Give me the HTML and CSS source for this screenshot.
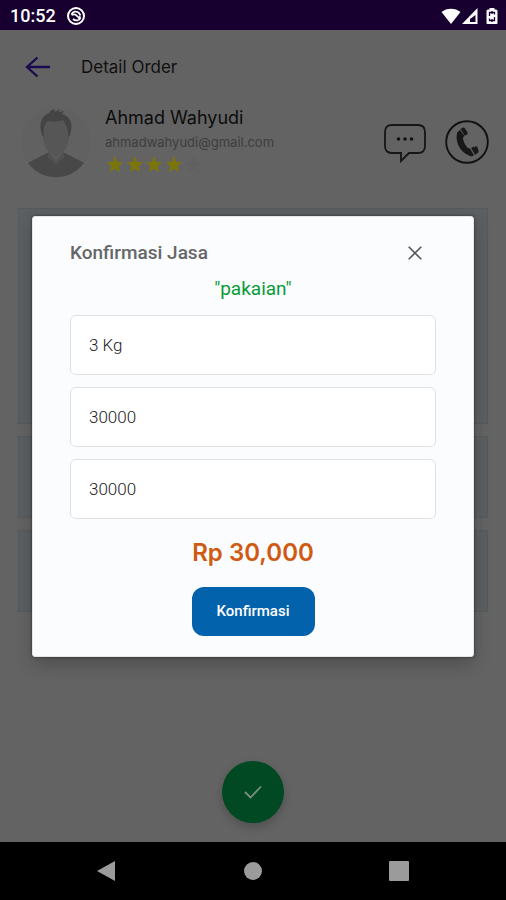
FILE: index.html
```html
<!DOCTYPE html>
<html lang="id">
<head>
<meta charset="utf-8">
<meta name="viewport" content="width=device-width, initial-scale=1">
<title>Detail Order</title>
<link rel="stylesheet" href="styles.css">
</head>
<body>
<header class="status">
  <span class="clock">10:52</span>
  <svg class="status-app" width="20" height="20" viewBox="0 0 20 20" aria-hidden="true">
    <circle cx="10" cy="10" r="8" fill="none" stroke="#fff" stroke-width="2"/>
    <path d="M5.500 8.500c1-3 5-4 7.500-1.500l1.500 2.500M14.500 11.500c-1 3-5 4-7.500 1.500M5.500 9c2-1 4-1 5.500 1s2.500 1.500 3.500.500M12.500 12l1.500 2" fill="none" stroke="#fff" stroke-width="1.800"/>
  </svg>
  <span class="status-icons">
    <svg width="20" height="18" viewBox="0 0 20 18" aria-hidden="true"><path d="M10 17 0.500 5C5.500.500 14.500.500 19.500 5Z" fill="#fff"/></svg>
    <svg width="17" height="18" viewBox="0 0 17 18" aria-hidden="true"><path d="M16.500 1v16H1Z" fill="#fff"/><path d="M14.500 8v7H9V12Z" fill="#17002f"/></svg>
    <svg class="battery" width="12" height="18" viewBox="0 0 12 18" aria-hidden="true"><path d="M3.500 2.500V1h5v1.500H10a1.500 1.500 0 0 1 1.500 1.500v12A1 1 0 0 1 10.500 17h-9a1 1 0 0 1-1-1V4A1.500 1.500 0 0 1 2 2.500Z" fill="#fff"/><path d="M8.500 7.500V5.500h-5V9M3.500 11.500v2h5V10M6 4v3M6 12v3" fill="none" stroke="#17002f" stroke-width="1.300"/></svg>
  </span>
</header>

<main class="screen">
  <div class="toolbar">
    <a class="back" href="#" aria-label="Kembali">
      <svg width="26" height="22" viewBox="0 0 26 22"><path d="M25 11H2M12.500 1.500 2 11l10.500 9.500" fill="none" stroke="#1c0a50" stroke-width="2.300"/></svg>
    </a>
    <h1 class="page-title">Detail Order</h1>
  </div>

  <section class="customer">
    <svg class="avatar" width="72" height="74" viewBox="0 0 72 74" aria-hidden="true">
      <circle cx="36" cy="38" r="35" fill="#616161"/>
      <path d="M8 59 27 49h18L64 59C50 78 22 78 8 59Z" fill="#484848"/>
      <path d="M28 44v9l8 7 8-7v-9Z" fill="#595959"/>
      <path d="M27 50l9 12 9-12-1-2-8 10-8-10Z" fill="#505050"/>
      <ellipse cx="36" cy="31" rx="13" ry="20" fill="#565656"/>
      <path d="M22 31C18 19 22 12 29 9c2-3 5-4 5-4l1 3 5-3-1 3 5-1-2 3c8 2 12 10 8 21l-2 3c1-10-3-15-5-18-6 2-12 2-15 1-4 3-5 8-4 17Z" fill="#444"/>
    </svg>
    <div class="customer-text">
      <h2 class="customer-name">Ahmad Wahyudi</h2>
      <p class="customer-mail">ahmadwahyudi@gmail.com</p>
      <svg class="stars" width="100" height="18" viewBox="0 0 100 18" role="img" aria-label="4 dari 5 bintang">
        <defs><path id="star" d="M10 0l2.200 6 6 .300-4.700 3.900 1.700 6L10 12.800l-5.200 3.400 1.700-6L1.800 6.300l6-.300Z"/></defs>
        <g fill="#7c760a"><use href="#star"/><use href="#star" x="20"/><use href="#star" x="39"/><use href="#star" x="59"/></g>
        <use href="#star" x="79" fill="#606061"/>
      </svg>
    </div>
    <button class="icon-button" type="button" aria-label="Pesan">
      <svg width="44" height="44" viewBox="0 0 44 44"><path d="M9 5h26q7 0 7 7v14q0 7-7 7H26l-8 8v-8H9q-7 0-7-7V12q0-7 7-7Z" fill="none" stroke="#161616" stroke-width="1.800"/><g fill="#111"><circle cx="15.500" cy="19" r="1.800"/><circle cx="22" cy="19" r="1.800"/><circle cx="28.500" cy="19" r="1.800"/></g></svg>
    </button>
    <button class="icon-button" type="button" aria-label="Telepon">
      <svg width="44" height="44" viewBox="0 0 44 44"><circle cx="22" cy="22" r="20.800" fill="none" stroke="#111" stroke-width="1.900"/><path d="M12.500 12c-3 7 1 20 12.500 24 1.500.500 3 .300 4-.500l-4-7c-1.500 0-2.500-.500-3.500-2-2-3-3-5-3.500-8 0-1.500.500-2 1.500-2.500l-4.500-6Z" fill="#181818"/><path d="m15.500 9 2.500-1.500q1-.500 2 1l2.500 4q.500 1.500-.500 2l-2.200 1.300ZM26.200 28l2-1.200q.500-.500 1 .700l1.500-1.200q1-.500 1.500.500l1.300 3.700q.500 1.500-1 2.500l-2.500 2Z" fill="#181818"/></svg>
    </button>
  </section>

  <div class="panels" aria-hidden="true">
    <div class="panel panel-large"></div>
    <div class="panel"></div>
    <div class="panel"></div>
  </div>

  <button class="fab" type="button" aria-label="Selesai">
    <svg width="18" height="14" viewBox="0 0 18 14"><path d="m1 7 5.500 5.500L17 1.500" fill="none" stroke="#7b8f80" stroke-width="1.800"/></svg>
  </button>

  <div class="overlay">
    <form class="dialog" role="dialog" aria-labelledby="dialog-title">
      <div class="dialog-head">
        <h2 class="dialog-title" id="dialog-title">Konfirmasi Jasa</h2>
        <button class="close" type="button" aria-label="Tutup">
          <svg width="14" height="14" viewBox="0 0 14 14"><path d="m.700.700 12.600 12.600M13.300.700.700 13.300" stroke="#555" stroke-width="1.600"/></svg>
        </button>
      </div>
      <p class="service">"pakaian"</p>
      <div class="fields">
        <input class="field" type="text" value="3 Kg" aria-label="Berat">
        <input class="field" type="text" value="30000" aria-label="Harga">
        <input class="field" type="text" value="30000" aria-label="Total">
      </div>
      <p class="price">Rp 30,000</p>
      <button class="confirm" type="button">Konfirmasi</button>
    </form>
  </div>
</main>

<nav class="navbar">
  <button class="nav-button" type="button" aria-label="Kembali"><svg width="20" height="22" viewBox="0 0 20 22"><path d="M18 1v20L0 11Z" fill="#9b9b9b"/></svg></button>
  <button class="nav-button" type="button" aria-label="Beranda"><svg width="20" height="20" viewBox="0 0 20 20"><circle cx="10" cy="10" r="9" fill="#9b9b9b"/></svg></button>
  <button class="nav-button" type="button" aria-label="Terbaru"><svg width="20" height="20" viewBox="0 0 20 20"><rect width="20" height="20" rx="1" fill="#9b9b9b"/></svg></button>
</nav>
</body>
</html>
```
FILE: styles.css
```css
* { box-sizing: border-box; }

body {
  margin: 0;
  min-height: 100vh;
  display: flex;
  flex-direction: column;
  background: #636363;
  font-family: Inter, "Liberation Sans", sans-serif;
}

h1, h2, p { margin: 0; }

button {
  padding: 0;
  border: 0;
  background: none;
  font: inherit;
}

svg { display: block; flex: none; }

.status {
  display: flex;
  align-items: center;
  height: 30px;
  padding: 2px 8px 0 10px;
  background: #17002f;
  color: #fff;
}

.clock {
  font: 500 18px/28px Roboto, sans-serif;
}

.status-app { margin-left: 10px; }

.status-icons {
  display: flex;
  margin-left: auto;
}

.battery { margin-left: 8px; }

.screen {
  position: relative;
  flex: 1;
  display: flex;
  flex-direction: column;
}

.toolbar {
  display: flex;
  align-items: center;
  gap: 30px;
  height: 74px;
  padding: 0 25px;
}

.page-title {
  color: #101010;
  font-size: 17px;
  line-height: 28px;
  font-weight: 400;
}

.customer {
  display: flex;
  align-items: flex-start;
  padding: 0 17px 0 20px;
  height: 104px;
}

.customer-text {
  flex: 1;
  padding-left: 13px;
}

.customer-name {
  color: #0c0c0c;
  font-size: 18px;
  line-height: 28px;
  font-weight: 400;
}

.customer-mail {
  color: #3e3e3e;
  font-size: 13px;
  line-height: 20px;
  font-weight: 400;
}

.stars { margin-top: 4px; }

.icon-button {
  margin: 16px 0 0 18px;
}

.panels {
  display: flex;
  flex-direction: column;
  gap: 12px;
  padding: 0 18px;
}

.panel {
  height: 82px;
  background: #5b5f61;
  border: 1px solid #575a5b;
}

.panel-large { height: 216px; }

.fab {
  display: grid;
  place-items: center;
  width: 62px;
  height: 62px;
  margin: auto auto 19px;
  border-radius: 50%;
  background: #004922;
  box-shadow: 0 4px 8px rgba(0, 0, 0, .2);
}

.overlay {
  position: absolute;
  inset: 0;
  display: grid;
  align-items: center;
  padding: 0 32px;
}

.dialog {
  display: flex;
  flex-direction: column;
  padding: 20px 37px;
  border: 1px solid #e4e6e8;
  border-radius: 3px;
  background: #fafcfe;
  box-shadow: 0 8px 18px rgba(0, 0, 0, .2), 0 0 3px rgba(0, 0, 0, .5);
}

.dialog-head {
  display: flex;
  align-items: center;
  justify-content: space-between;
  height: 32px;
  padding-right: 14px;
}

.dialog-title {
  color: #666;
  font: 500 19px/28px Roboto, sans-serif;
}

.service {
  margin-top: 6px;
  color: #099b38;
  font: 400 19px/28px Roboto, sans-serif;
  text-align: center;
}

.fields {
  display: grid;
  gap: 12px;
  margin-top: 12px;
}

.field {
  width: 100%;
  height: 60px;
  padding: 0 18px;
  border: 1px solid #dfe2e5;
  border-radius: 6px;
  background: #fff;
  color: #222;
  font: 300 17px Roboto, sans-serif;
}

.price {
  margin-top: 18px;
  color: #d05a12;
  font-size: 24px;
  line-height: 32px;
  font-weight: 600;
  text-align: center;
}

.confirm {
  align-self: center;
  width: 123px;
  height: 49px;
  margin-top: 18px;
  border-radius: 12px;
  background: #0362ac;
  color: #fff;
  font: 500 15px Roboto, sans-serif;
}

.navbar {
  display: grid;
  grid-template-columns: repeat(3, 1fr);
  width: 100%;
  height: 58px;
  padding: 0 34px;
  background: #000;
}

.nav-button {
  display: grid;
  place-items: center;
}
```
